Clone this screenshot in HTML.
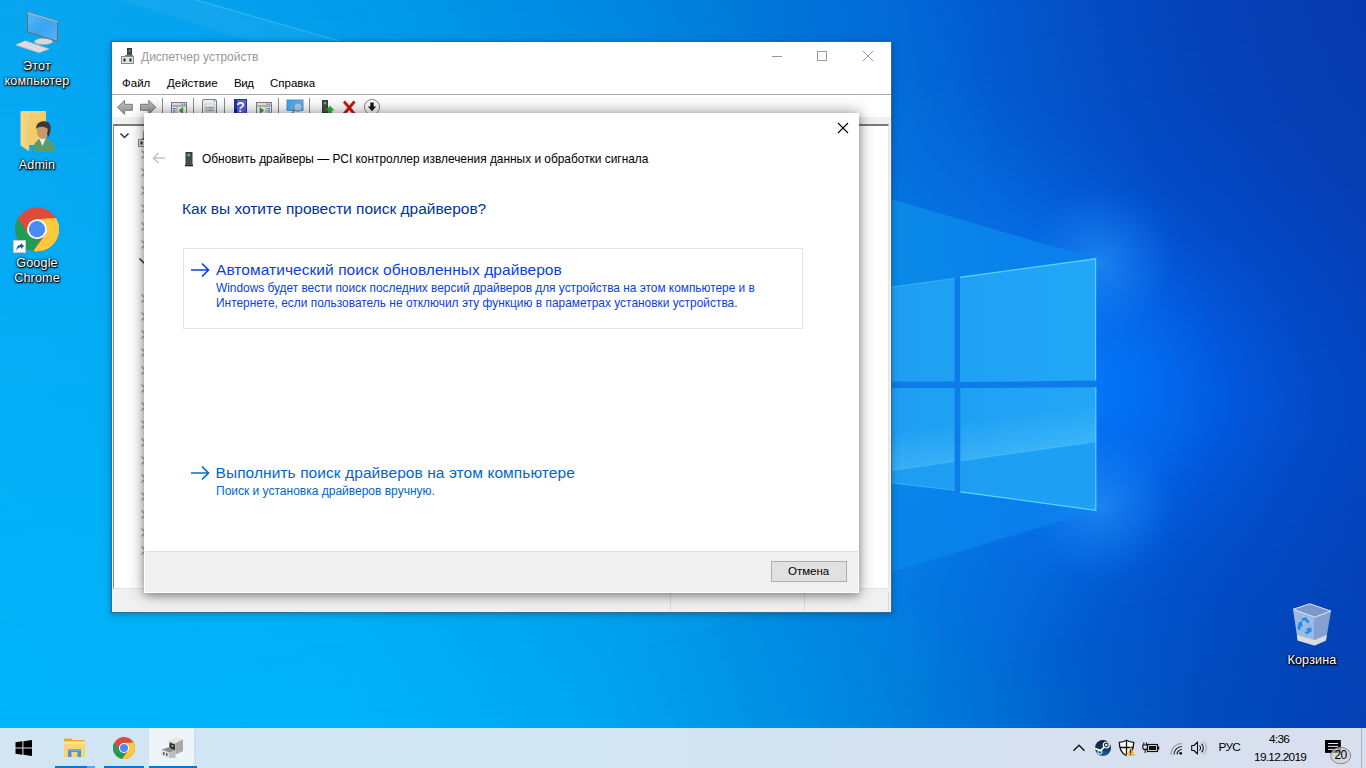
<!DOCTYPE html>
<html lang="ru">
<head>
<meta charset="utf-8">
<title>Диспетчер устройств</title>
<style>
html,body{margin:0;padding:0;overflow:hidden;}
body{width:1366px;height:768px;overflow:hidden;position:relative;background:#0078d7;font-family:"Liberation Sans",sans-serif;font-size:11.5px;color:#000;}
.abs{position:absolute;}
.t{position:absolute;white-space:nowrap;line-height:1;}
#wall{position:absolute;left:0;top:0;width:1366px;height:768px;}
/* desktop icon labels */
.dl{position:absolute;white-space:nowrap;line-height:1;color:#fff;font-size:12.6px;letter-spacing:.15px;text-align:center;text-shadow:1px 1px 1px rgba(0,0,0,.95),0 1px 2px rgba(0,0,0,.95),0 0 3px rgba(0,0,0,.85),0 0 1px rgba(0,0,0,.8);}
/* device manager window */
#dm{position:absolute;left:111px;top:41px;width:779px;height:570px;background:#fff;border:1px solid #2b6ea6;box-shadow:0 2px 8px rgba(0,0,0,.22),0 0 3px rgba(0,0,0,.12);}
#dlg{position:absolute;left:144px;top:113px;width:715px;height:480px;background:#fff;box-shadow:0 0 15px rgba(0,0,0,.42),0 3px 7px rgba(0,0,0,.22);}
#tb{position:absolute;left:0;top:728px;width:1366px;height:40px;background:linear-gradient(90deg,#d2e5f2 0,#d2e5f2 45%,#d6e0ee 75%,#d8dfee 100%);}
.m{font-size:11.5px;color:#000}
.o1{font-size:11.9px;color:#0b40e0}
.tk{font-size:11.8px;color:#000;letter-spacing:-.68px}
</style>
</head>
<body>
<!--WALL-->
<svg id="wall" width="1366" height="768" viewBox="0 0 1366 768">
<defs>
<linearGradient id="gbot" x1="0" y1="0" x2="1366" y2="0" gradientUnits="userSpaceOnUse">
<stop offset="0" stop-color="#00b6fb"/>
<stop offset="0.256" stop-color="#00b5fa"/>
<stop offset="0.439" stop-color="#00a8f2"/>
<stop offset="0.512" stop-color="#009cea"/>
<stop offset="0.586" stop-color="#0090e4"/>
<stop offset="0.659" stop-color="#0082de"/>
<stop offset="0.732" stop-color="#0070d6"/>
<stop offset="0.805" stop-color="#0060ce"/>
<stop offset="0.878" stop-color="#0054c8"/>
<stop offset="1" stop-color="#0448c0"/>
</linearGradient>
<linearGradient id="gtop" x1="0" y1="0" x2="1366" y2="0" gradientUnits="userSpaceOnUse">
<stop offset="0" stop-color="#08a6f0"/>
<stop offset="0.146" stop-color="#05a2ee"/>
<stop offset="0.293" stop-color="#0098e8"/>
<stop offset="0.439" stop-color="#0088e0"/>
<stop offset="0.512" stop-color="#007eda"/>
<stop offset="0.586" stop-color="#0072d8"/>
<stop offset="0.659" stop-color="#0268d6"/>
<stop offset="0.732" stop-color="#035acf"/>
<stop offset="0.805" stop-color="#0450c8"/>
<stop offset="0.878" stop-color="#0548c2"/>
<stop offset="1" stop-color="#0740b8"/>
</linearGradient>
<linearGradient id="gvm" x1="0" y1="0" x2="0" y2="768" gradientUnits="userSpaceOnUse">
<stop offset="0" stop-color="#fff" stop-opacity="1"/>
<stop offset="1" stop-color="#fff" stop-opacity="0"/>
</linearGradient>
<mask id="mtop"><rect width="1366" height="768" fill="url(#gvm)"/></mask>
<radialGradient id="gglow" cx="1100" cy="385" r="330" gradientUnits="userSpaceOnUse" gradientTransform="translate(1100 385) scale(1 .95) translate(-1100 -385)">
<stop offset="0" stop-color="#0070ff" stop-opacity=".9"/>
<stop offset="0.3" stop-color="#0068f8" stop-opacity=".6"/>
<stop offset="0.65" stop-color="#0058e8" stop-opacity=".25"/>
<stop offset="1" stop-color="#0050e0" stop-opacity="0"/>
</radialGradient>
<linearGradient id="gpane" x1="892" y1="0" x2="1096" y2="0" gradientUnits="userSpaceOnUse">
<stop offset="0" stop-color="#1e9ff2"/>
<stop offset="1" stop-color="#22a6f6"/>
</linearGradient>
<linearGradient id="gbeamT" x1="880" y1="0" x2="1096" y2="0" gradientUnits="userSpaceOnUse">
<stop offset="0" stop-color="#0a8ee8"/>
<stop offset="1" stop-color="#0a80f0"/>
</linearGradient>
<linearGradient id="gbeamB" x1="1096" y1="0" x2="500" y2="0" gradientUnits="userSpaceOnUse">
<stop offset="0" stop-color="#0a84f0" stop-opacity=".7"/>
<stop offset="0.4" stop-color="#0a90ec" stop-opacity=".5"/>
<stop offset="1" stop-color="#06a8f4" stop-opacity="0"/>
</linearGradient>
</defs>
<rect width="1366" height="768" fill="url(#gbot)"/>
<rect width="1366" height="768" fill="url(#gtop)" mask="url(#mtop)"/>
<rect width="1366" height="768" fill="url(#gglow)"/>
<radialGradient id="gglow2" cx="930" cy="385" r="300" gradientUnits="userSpaceOnUse"><stop offset="0" stop-color="#1490f6" stop-opacity=".5"/><stop offset="0.55" stop-color="#108af4" stop-opacity=".3"/><stop offset="1" stop-color="#0c80f0" stop-opacity="0"/></radialGradient>
<rect x="700" width="666" height="768" fill="url(#gglow2)"/>
<radialGradient id="gvtr" cx="1366" cy="0" r="420" gradientUnits="userSpaceOnUse"><stop offset="0" stop-color="#062c98" stop-opacity=".35"/><stop offset="1" stop-color="#062c98" stop-opacity="0"/></radialGradient>
<radialGradient id="gvbr" cx="1366" cy="768" r="380" gradientUnits="userSpaceOnUse"><stop offset="0" stop-color="#062c98" stop-opacity=".3"/><stop offset="1" stop-color="#062c98" stop-opacity="0"/></radialGradient>
<rect x="900" width="466" height="768" fill="url(#gvtr)"/>
<rect x="900" width="466" height="768" fill="url(#gvbr)"/>
<radialGradient id="ghalo1" cx="1100" cy="262" r="75" gradientUnits="userSpaceOnUse"><stop offset="0" stop-color="#38a8ff" stop-opacity=".45"/><stop offset="1" stop-color="#2090ff" stop-opacity="0"/></radialGradient>
<radialGradient id="ghalo2" cx="1100" cy="506" r="75" gradientUnits="userSpaceOnUse"><stop offset="0" stop-color="#38a8ff" stop-opacity=".45"/><stop offset="1" stop-color="#2090ff" stop-opacity="0"/></radialGradient>
<rect x="1000" y="170" width="200" height="180" fill="url(#ghalo1)"/>
<rect x="1000" y="420" width="200" height="180" fill="url(#ghalo2)"/>
<!-- light beams -->
<polygon points="120,0 196,0 340,41 250,41" fill="#fff" opacity=".05"/>
<path d="M196 0 L340 41" stroke="#8fdcff" stroke-width="1.200" opacity=".3"/>
<polygon points="880,196 1096,259 1096,262 880,292" fill="url(#gbeamT)" opacity=".85"/>
<polygon points="1096,510.400 500,690.600 500,478 880,478" fill="url(#gbeamB)"/>
<!-- gap fill -->
<polygon points="880,288.800 1095.800,258.800 1095.800,510.400 880,481.500" fill="#0e7ce8"/>
<!-- logo panes -->
<polygon points="880,288.800 954.500,278.300 954.500,381.500 880,381.500" fill="url(#gpane)"/>
<polygon points="960,277.400 1095.600,258.800 1095.600,380.600 960,382" fill="url(#gpane)"/>
<polygon points="880,388 954.600,388 954.600,490.400 880,481.500" fill="url(#gpane)"/>
<polygon points="960.300,388 1095.800,387.200 1095.800,510.400 960.300,491.800" fill="url(#gpane)"/>
<!-- reflection in lower panes -->
<linearGradient id="grefl" x1="960.300" y1="460.800" x2="955" y2="423" gradientUnits="userSpaceOnUse"><stop offset="0" stop-color="#7ad8ff" stop-opacity=".28"/><stop offset="1" stop-color="#7ad8ff" stop-opacity="0"/></linearGradient>
<polygon points="880,472 954.500,461.500 954.500,425 880,436" fill="url(#grefl)"/>
<polygon points="960.300,460.800 1095.600,441.700 1095.600,405 960.300,424" fill="url(#grefl)"/>
<polygon points="880,472 954.600,461.500 954.600,490.400 880,481.500" fill="#1c9cf2" opacity=".7"/>
<polygon points="960.300,460.800 1095.800,441.700 1095.800,510.400 960.300,491.800" fill="#1c9cf2" opacity=".7"/>
<!-- bright edges -->
<polyline points="960,277.400 1095.600,258.800 1095.600,380.600" fill="none" stroke="#62dcfc" stroke-width="1.200" opacity=".9"/>
<polyline points="880,288.800 954.500,278.300" fill="none" stroke="#4cc4f6" stroke-width="1" opacity=".6"/>
<polyline points="1095.800,387.200 1095.800,510.400 960.300,491.800" fill="none" stroke="#62dcfc" stroke-width="1.200" opacity=".9"/>
<polyline points="954.600,490.400 880,481.500" fill="none" stroke="#4cc4f6" stroke-width="1" opacity=".6"/>
<polyline points="880,472 954.600,461.500" fill="none" stroke="#4cc8f8" stroke-width="1" opacity=".6"/>
<polyline points="960.300,460.800 1095.800,441.700" fill="none" stroke="#4cc8f8" stroke-width="1" opacity=".6"/>
</svg>
<!--/WALL-->
<!--ICONS-->
<!-- This PC -->
<svg class="abs" style="left:10px;top:8px" width="56" height="50" viewBox="10 8 56 50">
<defs><linearGradient id="gscr" x1="0" y1="0" x2="1" y2="1"><stop offset="0" stop-color="#5db8f6"/><stop offset="0.5" stop-color="#3aa4f2"/><stop offset="1" stop-color="#55b4f6"/></linearGradient></defs>
<ellipse cx="43.500" cy="41.500" rx="9.200" ry="3.300" fill="#d8d8d8" stroke="#9a9a9a" stroke-width=".6"/>
<polygon points="27.400,12 57.700,21.500 57.300,41.400 27.600,31.900" fill="url(#gscr)" stroke="#6c6c6c" stroke-width="1"/>
<polygon points="27.400,12 57.700,21.500 57.700,22.300 27.400,12.800" fill="#d0d0d0"/>
<polygon points="15.600,45 25.400,40.700 49.300,48.900 39,52.800" fill="#e6e6e6" stroke="#b4b4b4" stroke-width=".6"/>
<path d="M19 44.800 L42 52 M22 43.300 L45 50.600 M25 42 L47.500 49.500" stroke="#c4c4c4" stroke-width=".7" fill="none"/>
</svg>
<div class="dl" id="l1a" style="left:0;width:74px;top:60px">Этот</div>
<div class="dl" id="l1b" style="left:0;width:74px;top:75px">компьютер</div>
<!-- Admin folder -->
<svg class="abs" style="left:16px;top:108px" width="44" height="48" viewBox="16 108 44 48">
<defs><linearGradient id="gfold" x1="0" y1="0" x2="1" y2="0"><stop offset="0" stop-color="#f6d98a"/><stop offset="1" stop-color="#f2cf72"/></linearGradient></defs>
<rect x="20.800" y="111" width="25.100" height="34" fill="#f4d47c"/>
<rect x="29" y="113" width="16.900" height="32" fill="#f1cd6e"/>
<polygon points="20.800,111.500 29.300,118.200 28.900,151 20.800,145.600" fill="url(#gfold)" stroke="#ecc665" stroke-width=".5"/>
<path d="M33.200 152 C33.200 143 37 138.500 43 138.500 C50 138.500 55.400 143 55.400 152 Z" fill="#5a9a6c"/>
<path d="M39.500 139 L42.500 146 L45.500 139 Z" fill="#e8eef0"/>
<ellipse cx="42.800" cy="131.500" rx="6" ry="7" fill="#c89a6a"/>
<path d="M36 129 C36 122 42 120.500 46 121.500 C50.500 122.500 51.500 127 50.200 131.500 C49 130 47 127.500 44 127 C41 126.500 38 127 36 129 Z" fill="#3a3a3a"/>
<path d="M48.500 126 C51 128 50.500 134 48 137.500 L47 134 Z" fill="#3a3a3a"/>
</svg>
<div class="dl" id="l2" style="left:0;width:74px;top:158.500px">Admin</div>
<!-- Chrome -->
<svg class="abs" style="left:12px;top:205px" width="50" height="50" viewBox="12 205 50 50">
<g transform="translate(37,229.300)">
<circle r="22" fill="#dd4b3e"/>
<path d="M-19.050 -11 A22 22 0 0 0 -3.400 21.740 L5.200 6.800 A10 10 0 0 1 -8.660 5 Z" fill="#1f9d58"/>
<path d="M-3.400 21.740 A22 22 0 0 0 19.050 -11 L0 -10 A10 10 0 0 1 8.660 5 Z" fill="#fdc93d"/>
<path d="M19.050 -11 L0 -10 L8.660 5 L-3.400 21.740 A22 22 0 0 0 19.050 -11Z" fill="#fdc93d"/>
<circle r="10" fill="#fff"/>
<circle r="8.200" fill="#4c8bf5"/>
</g>
<rect x="13.500" y="240.500" width="12" height="12" fill="#fff" stroke="#c8c8c8" stroke-width="1"/>
<path d="M16.500 250.500 C16.500 246.500 18.500 244.800 21 244.800 L21 243 L24 246 L21 249 L21 247.200 C19 247.200 17.500 248 16.500 250.500 Z" fill="#1a5aa8"/>
</svg>
<div class="dl" id="l3a" style="left:0;width:74px;top:257px">Google</div>
<div class="dl" id="l3b" style="left:0;width:74px;top:272px">Chrome</div>
<!-- Recycle bin -->
<svg class="abs" style="left:1288px;top:600px" width="48" height="50" viewBox="1288 600 48 50">
<polygon points="1293,609.300 1314.900,617.200 1314.600,645.600 1297.700,640.400" fill="#a9c3e4" opacity=".92"/>
<polygon points="1314.900,617.200 1331,611.100 1326,640.400 1314.600,645.600" fill="#8fa9d2" opacity=".92"/>
<polygon points="1293,609.300 1309.700,603.800 1331,611.100 1314.900,617.200" fill="#7c97c8" stroke="#dfe8f4" stroke-width="1"/>
<polygon points="1297,635 1314.600,640 1326.700,635 1326,640.400 1314.600,645.600 1297.700,640.400" fill="#dcdcdc"/>
<g transform="translate(1304.600,626.300) scale(1.250)" fill="#1e8be6">
<path d="M-2.600 -6.200 L1.200 -7.200 L4 -3.200 L2.200 -2.400 L0.400 -4.800 L-1.800 -4.200 Z"/>
<path d="M-4.800 -2.800 L-2.400 -4.400 L-1.600 0.600 L-3 0 L-3.600 3.400 L-5.800 1.800 Z"/>
<path d="M0.600 2.200 L5.200 0.800 L5.800 3.800 L1.800 6.600 L0 4.800 L2.800 3.400 Z"/>
</g>
</svg>
<div class="dl" id="l4" style="left:1275px;width:74px;top:654px">Корзина</div>
<!--/ICONS-->
<!--DM-->
<div id="dm"></div>
<!-- title bar -->
<svg class="abs" style="left:120px;top:48px" width="16" height="16" viewBox="0 0 16 16">
<rect x="7" y="0" width="5" height="8" fill="#3a3a3a"/><rect x="8" y="1" width="3" height="6" fill="#4a4a4a"/><rect x="9" y="2" width="1.4" height="1.4" fill="#3ee03e"/>
<rect x="5" y="7" width="8" height="1.2" fill="#777"/>
<rect x="1.5" y="8.5" width="12" height="7" fill="#e4e4e4" stroke="#8a8a8a" stroke-width="1"/>
<rect x="3.5" y="10.5" width="2" height="3" fill="#222"/><rect x="9.5" y="10.5" width="2" height="3" fill="#222"/>
</svg>
<div class="t" id="dmtitle" style="left:141px;top:51px;font-size:12px;color:#999">Диспетчер устройств</div>
<div class="abs" style="left:772px;top:56px;width:10px;height:1px;background:#999"></div>
<div class="abs" style="left:817px;top:51px;width:8px;height:8px;border:1px solid #999;box-sizing:content-box"></div>
<svg class="abs" style="left:862px;top:50px" width="12" height="12" viewBox="0 0 12 12"><path d="M1 1 L11 11 M11 1 L1 11" stroke="#999" stroke-width="1" fill="none"/></svg>
<!-- menu -->
<div class="t m" id="m1" style="margin-top:1px;left:122px;top:77px;">Файл</div>
<div class="t m" id="m2" style="margin-top:1px;left:167px;top:77px;">Действие</div>
<div class="t m" id="m3" style="margin-top:1px;left:234px;top:77px;letter-spacing:-.4px;">Вид</div>
<div class="t m" id="m4" style="margin-top:1px;left:270px;top:77px;">Справка</div>
<div class="abs" style="left:112px;top:94px;width:779px;height:1px;background:#a8a8a8"></div>
<!-- toolbar -->
<div class="abs" style="left:112px;top:95px;width:779px;height:22px;background:#fff"></div>
<div class="abs" style="left:112px;top:117px;width:779px;height:7px;background:#f0f0f0"></div>
<!--TOOLICONS-->
<svg class="abs" style="left:112px;top:95px" width="300" height="22" viewBox="112 95 300 22">
<defs>
<linearGradient id="ga" x1="0" y1="0" x2="0" y2="1"><stop offset="0" stop-color="#c9c9c9"/><stop offset="0.5" stop-color="#a9a9a9"/><stop offset="1" stop-color="#8d8d8d"/></linearGradient>
<linearGradient id="gmon" x1="0" y1="0" x2="1" y2="1"><stop offset="0" stop-color="#3aa0f0"/><stop offset="1" stop-color="#7cc8fa"/></linearGradient>
</defs>
<!-- back / forward arrows -->
<path d="M117.500 107.300 L124.500 100.300 L124.500 104.300 L132.300 104.300 L132.300 110.300 L124.500 110.300 L124.500 114.300 Z" fill="url(#ga)" stroke="#7b7b7b" stroke-width="1" stroke-linejoin="round"/>
<path d="M155.800 107.300 L148.800 100.300 L148.800 104.300 L140.500 104.300 L140.500 110.300 L148.800 110.300 L148.800 114.300 Z" fill="url(#ga)" stroke="#7b7b7b" stroke-width="1" stroke-linejoin="round"/>
<!-- separators -->
<g fill="#8e8e8e"><rect x="162" y="98" width="1" height="17"/><rect x="193" y="98" width="1" height="17"/><rect x="224" y="98" width="1" height="17"/><rect x="278" y="98" width="1" height="17"/><rect x="309" y="98" width="1" height="17"/></g>
<!-- icon1: show/hide console tree -->
<g>
<rect x="171.500" y="102.500" width="15" height="13" fill="#fafafa" stroke="#808080"/>
<rect x="172" y="103" width="14" height="2.500" fill="#e8e8e8"/>
<rect x="181.500" y="103.500" width="1.300" height="1.300" fill="#4a78d0"/><rect x="183.800" y="103.500" width="1.300" height="1.300" fill="#4a78d0"/>
<rect x="172" y="105.500" width="14" height="1" fill="#808080"/>
<rect x="176.500" y="106.500" width="1" height="9" fill="#b0b0b0"/>
<rect x="173" y="108" width="2.500" height="1.200" fill="#2a7ad8"/><rect x="173" y="110.300" width="2.500" height="1.200" fill="#2a7ad8"/><rect x="173" y="112.500" width="2.500" height="1.200" fill="#2a7ad8"/>
<path d="M182.800 107.500 L179 110.500 L182.800 113.500 Z" fill="#3cae3c" stroke="#2a962a" stroke-width=".6"/>
</g>
<!-- icon2: properties -->
<g>
<rect x="202.500" y="99.500" width="14" height="15" rx="1.500" fill="#f4f4f4" stroke="#808080"/>
<rect x="213.700" y="100.300" width="1.300" height="1.300" fill="#3a6ad0"/>
<rect x="205" y="104" width="9.500" height="8" fill="#e4e8ee" stroke="#c4c8d0" stroke-width=".6"/>
<rect x="206" y="104.600" width="3.200" height="1.300" fill="#fff"/><rect x="210" y="104.600" width="3.500" height="1.300" fill="#fff"/>
<rect x="206" y="107.200" width="1.300" height="1.300" fill="#1e90ff"/><rect x="208.200" y="107.300" width="5.300" height="1.100" fill="#8a8a8a"/>
<rect x="206" y="109.600" width="1.300" height="1.300" fill="#8a8a8a"/><rect x="208.200" y="109.700" width="5.300" height="1.100" fill="#8a8a8a"/>
</g>
<!-- icon3: help -->
<g>
<rect x="234" y="99" width="13" height="16" fill="#2430b8"/>
<rect x="237" y="100" width="9" height="14" fill="#6a72d8" opacity=".75"/>
<rect x="234" y="109" width="3" height="6" fill="#1a1a8a"/>
<text x="240.600" y="112.300" font-family="Liberation Sans, sans-serif" font-size="14" font-weight="bold" fill="#fff" text-anchor="middle">?</text>
</g>
<!-- icon4: show/hide action pane -->
<g>
<rect x="256.500" y="102.500" width="15" height="13" fill="#fafafa" stroke="#808080"/>
<rect x="257" y="103" width="14" height="2.500" fill="#e8e8e8"/>
<rect x="266.500" y="103.500" width="1.300" height="1.300" fill="#4a78d0"/><rect x="268.800" y="103.500" width="1.300" height="1.300" fill="#4a78d0"/>
<rect x="257" y="105.500" width="14" height="1" fill="#808080"/>
<rect x="265.500" y="106.500" width="1" height="9" fill="#b0b0b0"/>
<rect x="267.500" y="108" width="2.500" height="1.200" fill="#2a7ad8"/><rect x="267.500" y="110.300" width="2.500" height="1.200" fill="#2a7ad8"/><rect x="267.500" y="112.500" width="2.500" height="1.200" fill="#2a7ad8"/>
<path d="M260 107.500 L263.800 110.500 L260 113.500 Z" fill="#3cae3c" stroke="#2a962a" stroke-width=".6"/>
</g>
<!-- icon5: scan for hardware changes -->
<g>
<rect x="287" y="100" width="16" height="10.500" fill="url(#gmon)" stroke="#2a88e0" stroke-width=".8"/>
<path d="M291 114.500 L299 114.500" stroke="#9a9a9a" stroke-width="1.200"/>
<circle cx="298" cy="107" r="4.200" fill="#a8d4f8" stroke="#8a96a4" stroke-width="1.200" fill-opacity=".9"/>
<path d="M295 110.300 L291.200 114.300" stroke="#8a8a8a" stroke-width="1.600"/>
</g>
<!-- icon6: update driver -->
<g>
<rect x="322" y="100" width="6" height="13" fill="#3c3c3c"/><rect x="323" y="101" width="4" height="11" fill="#4c4c4c"/>
<rect x="324" y="102.200" width="2" height="2" fill="#42e642"/>
<rect x="321.500" y="113" width="6" height="2" fill="#1e1e1e"/>
<path d="M330 105.800 L334.500 110.500 L332 110.500 L332 113 L328 113 L328 110.500 L325.500 110.500 Z" fill="#2db82d"/>
<rect x="328" y="114" width="4" height="1.200" fill="#2db82d"/>
</g>
<!-- icon7: uninstall -->
<path d="M344 101.500 L354.500 114 M354.500 101.500 L344 114" stroke="#d01414" stroke-width="2.800" fill="none"/>
<!-- icon8: disable -->
<g>
<circle cx="372" cy="107" r="7.600" fill="#fdfdfd" stroke="#8a8a8a" stroke-width="1"/>
<path d="M370.300 102.500 L373.700 102.500 L373.700 106.500 L376.200 106.500 L372 111.300 L367.800 106.500 L370.300 106.500 Z" fill="#1a1a1a"/>
</g>
</svg>
<!--/TOOLICONS-->
<!-- tree panel -->
<div class="abs" style="left:112px;top:124px;width:779px;height:466px;background:#f0f0f0"></div>
<div class="abs" style="left:113px;top:124px;width:776px;height:465px;background:#fff;border-left:1px solid #8c8c8c;border-top:2px solid #7a7a7a;box-sizing:border-box;border-right:1px solid #e3e3e3;border-bottom:1px solid #e3e3e3"></div>
<svg class="abs" style="left:112px;top:124px" width="40" height="466" viewBox="112 124 40 466">
<path d="M120.5 133.5 L124.5 137.5 L128.5 133.5" stroke="#333" stroke-width="1.5" fill="none"/>
<g stroke="#a6a6a6" stroke-width="1.3" fill="none">
<path d="M141.5 150.5l4 4-4 4M141.5 168.5l4 4-4 4M141.5 186.5l4 4-4 4M141.5 204.5l4 4-4 4M141.5 222.5l4 4-4 4M141.5 240.5l4 4-4 4"/>
<path d="M141.5 294.5l4 4-4 4M141.5 312.5l4 4-4 4M141.5 330.5l4 4-4 4M141.5 348.5l4 4-4 4M141.5 366.5l4 4-4 4M141.5 384.5l4 4-4 4M141.5 402.5l4 4-4 4M141.5 420.5l4 4-4 4M141.5 438.5l4 4-4 4M141.5 456.5l4 4-4 4M141.5 474.5l4 4-4 4M141.5 492.5l4 4-4 4M141.5 510.5l4 4-4 4M141.5 528.5l4 4-4 4M141.5 546.5l4 4-4 4"/>
</g>
<path d="M139.500 258.500 l5 5 5-5" stroke="#333" stroke-width="1.500" fill="none"/>
<!-- root icon (clipped by dialog) -->
<rect x="138.500" y="139.500" width="12" height="7" fill="#e4e4e4" stroke="#8a8a8a"/>
<rect x="140.500" y="141.500" width="2" height="3" fill="#222"/>
<rect x="142" y="138" width="8" height="1.200" fill="#777"/>
<rect x="143.500" y="131" width="5" height="8" fill="#3a3a3a"/>
</svg>
<!-- status bar -->
<div class="abs" style="left:112px;top:590px;width:779px;height:22px;background:#f0f0f0"></div>
<div class="abs" style="left:670px;top:592px;width:1px;height:19px;background:#d9d9d9"></div>
<div class="abs" style="left:804px;top:592px;width:1px;height:19px;background:#d9d9d9"></div>
<div class="abs" style="left:888px;top:592px;width:1px;height:19px;background:#d9d9d9"></div>
<!--/DM-->
<!--DLG-->
<div id="dlg"></div>
<svg class="abs" style="left:837px;top:122px" width="12" height="12" viewBox="0 0 12 12"><path d="M1 1 L11 11 M11 1 L1 11" stroke="#000" stroke-width="1.100" fill="none"/></svg>
<!-- back arrow -->
<svg class="abs" style="left:152px;top:151px" width="14" height="14" viewBox="0 0 14 14"><path d="M13 7 L1.500 7 M6.500 2 L1.500 7 L6.500 12" stroke="#c2c2c2" stroke-width="1.400" fill="none"/></svg>
<!-- device icon -->
<svg class="abs" style="left:184px;top:151px" width="10" height="16" viewBox="0 0 10 16">
<rect x="1.500" y="1" width="7" height="12.500" fill="#3a3a3a"/><rect x="2.500" y="2" width="5" height="10.500" fill="#4a4a4a"/>
<rect x="3.500" y="3" width="2.200" height="2.200" fill="#40e840"/>
<rect x="1" y="13.500" width="8" height="1.800" fill="#1c1c1c"/>
</svg>
<div class="t" id="dtitle" style="left:202px;top:154px;font-size:11.9px;color:#000">Обновить драйверы — PCI контроллер извлечения данных и обработки сигнала</div>
<div class="t" id="dhead" style="left:182px;top:201px;font-size:15.500px;color:#003399">Как вы хотите провести поиск драйверов?</div>
<!-- option 1 -->
<div class="abs" style="left:183px;top:248px;width:618px;height:79px;border:1px solid #e2e2e2"></div>
<svg class="abs" style="left:190px;top:262px" width="20" height="16" viewBox="0 0 20 16"><path d="M1 8 L18.500 8 M12 1.500 L18.500 8 L12 14.500" stroke="#0b3fe6" stroke-width="1.700" fill="none"/></svg>
<div class="t" id="o1t" style="left:216px;top:262px;font-size:15.500px;letter-spacing:.056px;color:#0b40e0">Автоматический поиск обновленных драйверов</div>
<div class="t o1" id="o1a" style="left:216px;top:283px;letter-spacing:-.012px;">Windows будет вести поиск последних версий драйверов для устройства на этом компьютере и в</div>
<div class="t o1" id="o1b" style="left:216px;top:298px;letter-spacing:.02px;">Интернете, если пользователь не отключил эту функцию в параметрах установки устройства.</div>
<!-- option 2 -->
<svg class="abs" style="left:190px;top:465px" width="20" height="16" viewBox="0 0 20 16"><path d="M1 8 L18.500 8 M12 1.500 L18.500 8 L12 14.500" stroke="#0a6acc" stroke-width="1.700" fill="none"/></svg>
<div class="t" id="o2t" style="left:215.500px;top:465px;font-size:15.500px;letter-spacing:.074px;color:#0066cc">Выполнить поиск драйверов на этом компьютере</div>
<div class="t" id="o2a" style="left:216px;top:485px;font-size:12px;color:#0066cc">Поиск и установка драйверов вручную.</div>
<!-- footer -->
<div class="abs" style="left:145px;top:551px;width:713px;height:41px;background:#f0f0f0;border-top:1px solid #dfdfdf;box-sizing:border-box"></div>
<div class="abs" style="left:771px;top:561px;width:76px;height:21px;background:#e1e1e1;border:1px solid #adadad;box-sizing:border-box"></div>
<div class="t" id="bcancel" style="left:788px;top:566px;font-size:11.5px;color:#000">Отмена</div>
<!--/DLG-->
<!--TB-->
<div id="tb"></div>
<!-- start -->
<svg class="abs" style="left:15px;top:739px" width="18" height="18" viewBox="0 0 18 18"><path d="M0.500 3.300 L7.400 2.300 L7.400 8.500 L0.500 8.500 Z M8.400 2.150 L17 0.900 L17 8.500 L8.400 8.500 Z M0.500 9.500 L7.400 9.500 L7.400 15.700 L0.500 14.700 Z M8.400 9.500 L17 9.500 L17 17.100 L8.400 15.850 Z" fill="#000"/></svg>
<!-- explorer -->
<svg class="abs" style="left:63px;top:737px" width="24" height="22" viewBox="0 0 24 22">
<path d="M1 2.500 Q1 1.500 2 1.500 L8 1.500 L9.500 3 L21 3 Q22 3 22 4 L22 19.500 L1 19.500 Z" fill="#e9a825"/>
<rect x="1" y="4.500" width="21" height="15.500" rx=".8" fill="#fbd56b"/>
<rect x="1" y="4.500" width="21" height="3" fill="#fde08a"/>
<path d="M5 20 L5 12 L18 12 L18 20 L14.500 20 L14.500 15 L8.500 15 L8.500 20 Z" fill="#3f97e0"/>
<rect x="5" y="12" width="13" height="2" fill="#5fb0ee"/>
</svg>
<div class="abs" style="left:55px;top:766px;width:32px;height:2px;background:#0078d7"></div>
<div class="abs" style="left:87px;top:766px;width:8px;height:2px;background:#62a6de"></div>
<!-- chrome -->
<svg class="abs" style="left:112px;top:736px" width="24" height="24" viewBox="-12 -12 24 24">
<circle r="11" fill="#dd4b3e"/>
<path d="M-9.530 -5.500 A11 11 0 0 0 -1.700 10.870 L2.600 3.400 A5 5 0 0 1 -4.330 2.500 Z" fill="#1f9d58"/>
<path d="M9.530 -5.500 L0 -5 L4.330 2.500 L-1.700 10.870 A11 11 0 0 0 9.530 -5.500Z" fill="#fdc93d"/>
<circle r="5" fill="#fff"/>
<circle r="4" fill="#4c8bf5"/>
</svg>
<div class="abs" style="left:104px;top:766px;width:40px;height:2px;background:#0078d7"></div>
<!-- device manager (active) -->
<div class="abs" style="left:149px;top:728px;width:45px;height:40px;background:rgba(255,255,255,.6)"></div>
<div class="abs" style="left:149px;top:766px;width:48px;height:2px;background:#0078d7"></div>
<div class="abs" style="left:195px;top:730px;width:1px;height:34px;background:repeating-linear-gradient(#b8c4d0 0 1px,transparent 1px 3px)"></div>
<svg class="abs" style="left:160px;top:736px" width="26" height="24" viewBox="0 0 26 24">
<polygon points="9,5 17,1.500 23,3.500 23,15 15.500,18.500 9,16" fill="#c9c9c9"/>
<polygon points="9,5 17,1.500 23,3.500 15.500,7.300" fill="#e8e8e8"/>
<polygon points="15.500,7.300 23,3.500 23,15 15.500,18.500" fill="#a9a9a9"/>
<polygon points="9.500,6.500 15,8.500 15,15.500 9.500,13.500" fill="#2c2c2c"/>
<rect x="11.500" y="9" width="2" height="2" fill="#3be03b"/>
<polygon points="1.500,13.500 8,11.500 15.500,14.500 15.500,21.500 8,22 1.500,19.500" fill="#d6d6d6"/>
<polygon points="1.500,13.500 8,11.500 15.500,14.500 9,16.500" fill="#8c8c8c"/>
<polygon points="1.500,13.500 9,16.500 9,22 1.500,19.500" fill="#e2e2e2"/>
<polygon points="9,16.500 15.500,14.500 15.500,21.500 9,22" fill="#bdbdbd"/>
<rect x="3" y="16.300" width="1.500" height="2.500" fill="#444"/><rect x="6" y="17.300" width="1.500" height="2.500" fill="#444"/>
</svg>
<!-- tray -->
<svg class="abs" style="left:1068px;top:736px" width="150" height="24" viewBox="1068 736 150 24">
<path d="M1073.500 750.800 L1079 745.200 L1084.500 750.800" stroke="#111" stroke-width="1.300" fill="none"/>
<!-- steam -->
<defs><linearGradient id="gst" x1="0" y1="0" x2="0" y2="1"><stop offset="0" stop-color="#111d2e"/><stop offset="0.6" stop-color="#0e3a66"/><stop offset="1" stop-color="#1b6aa0"/></linearGradient></defs>
<circle cx="1103" cy="748" r="8" fill="url(#gst)"/>
<circle cx="1106.300" cy="745" r="3" fill="none" stroke="#fff" stroke-width="1.200"/><circle cx="1106.300" cy="745" r="1.300" fill="#e8e8e8"/>
<path d="M1095.200 748.500 L1100.500 750.800 L1104 747.300" stroke="#fff" stroke-width="1.600" fill="none" stroke-linecap="round"/>
<circle cx="1100" cy="752" r="2.100" fill="none" stroke="#fff" stroke-width="1"/>
<!-- defender shield -->
<path d="M1126.500 740.300 C1129 741.800 1131.500 742.300 1133.700 742.300 C1133.700 749 1131.500 753.500 1126.500 755.700 C1121.500 753.500 1119.300 749 1119.300 742.300 C1121.500 742.300 1124 741.800 1126.500 740.300 Z" fill="#fff" stroke="#111" stroke-width="1.300"/>
<path d="M1126.500 741 L1126.500 755 M1119.800 747.500 L1133.200 747.500" stroke="#111" stroke-width="1.300"/>
<path d="M1130.600 746.800 L1135.300 756 L1125.900 756 Z" fill="#fbc02d"/>
<rect x="1130.100" y="749.500" width="1.100" height="3.500" fill="#111"/><rect x="1130.100" y="753.800" width="1.100" height="1.100" fill="#111"/>
<!-- battery/plug -->
<rect x="1147.500" y="744.500" width="10" height="7" fill="none" stroke="#111" stroke-width="1.200"/>
<rect x="1149" y="746" width="7" height="4" fill="#111"/>
<rect x="1158" y="746.500" width="1.300" height="3" fill="#111"/>
<path d="M1143.800 742.500 L1143.800 745 M1146.500 742.500 L1146.500 745 M1142.800 745 L1147.500 745 L1147.500 747.500 C1147.500 749 1146.300 749.500 1145.200 749.500 C1144 749.500 1142.800 749 1142.800 747.500 Z M1145.200 749.500 L1145.200 753" stroke="#111" stroke-width="1.100" fill="none"/>
<!-- wifi -->
<g fill="none" stroke-linecap="butt">
<path d="M1171 754.500 A11 11 0 0 1 1182 743.500" stroke="#9a9a9a" stroke-width="1.100"/>
<path d="M1174 754.500 A8 8 0 0 1 1182 746.500" stroke="#222" stroke-width="1.200"/>
<path d="M1177 754.500 A5 5 0 0 1 1182 749.500" stroke="#222" stroke-width="1.200"/>
</g>
<circle cx="1180.700" cy="753.300" r="1.400" fill="#111"/>
<!-- volume -->
<path d="M1191.700 745.500 L1194 745.500 L1197.500 742 L1197.500 754 L1194 750.500 L1191.700 750.500 Z" fill="none" stroke="#111" stroke-width="1.100" stroke-linejoin="round"/>
<path d="M1199.500 745.700 A3 3 0 0 1 1199.500 750.300" fill="none" stroke="#111" stroke-width="1.100"/>
<path d="M1201.500 743.700 A6 6 0 0 1 1201.500 752.300" fill="none" stroke="#111" stroke-width="1.100"/>
<path d="M1203.700 741.600 A9 9 0 0 1 1203.700 754.400" fill="none" stroke="#a0a0a0" stroke-width="1"/>
</svg>
<div class="t tk" id="k1" style="left:1218.500px;top:742px;">РУС</div>
<div class="t tk" id="k2" style="left:1269px;top:733.500px;">4:36</div>
<div class="t tk" id="k3" style="left:1254px;top:751.500px;">19.12.2019</div>
<!-- action center -->
<svg class="abs" style="left:1322px;top:736px" width="34" height="30" viewBox="1322 736 34 30">
<rect x="1325" y="740" width="15.800" height="12.900" fill="#000"/>
<path d="M1328 743.500 L1338 743.500 M1328 746.400 L1338 746.400 M1328 749.400 L1338 749.400" stroke="#e2e9f2" stroke-width="1"/>
<ellipse cx="1340.700" cy="755.600" rx="10" ry="8.200" fill="#d0d0d0" fill-opacity=".68" stroke="#85878f" stroke-width="1"/>
<text id="k4" x="1340.600" y="759" font-family="Liberation Sans, sans-serif" font-size="12" letter-spacing="-.5" text-anchor="middle" fill="#000">20</text>
</svg>
<div class="abs" style="left:1361px;top:728px;width:1px;height:40px;background:#a9b4c2"></div>
<!--/TB-->
</body>
</html>
